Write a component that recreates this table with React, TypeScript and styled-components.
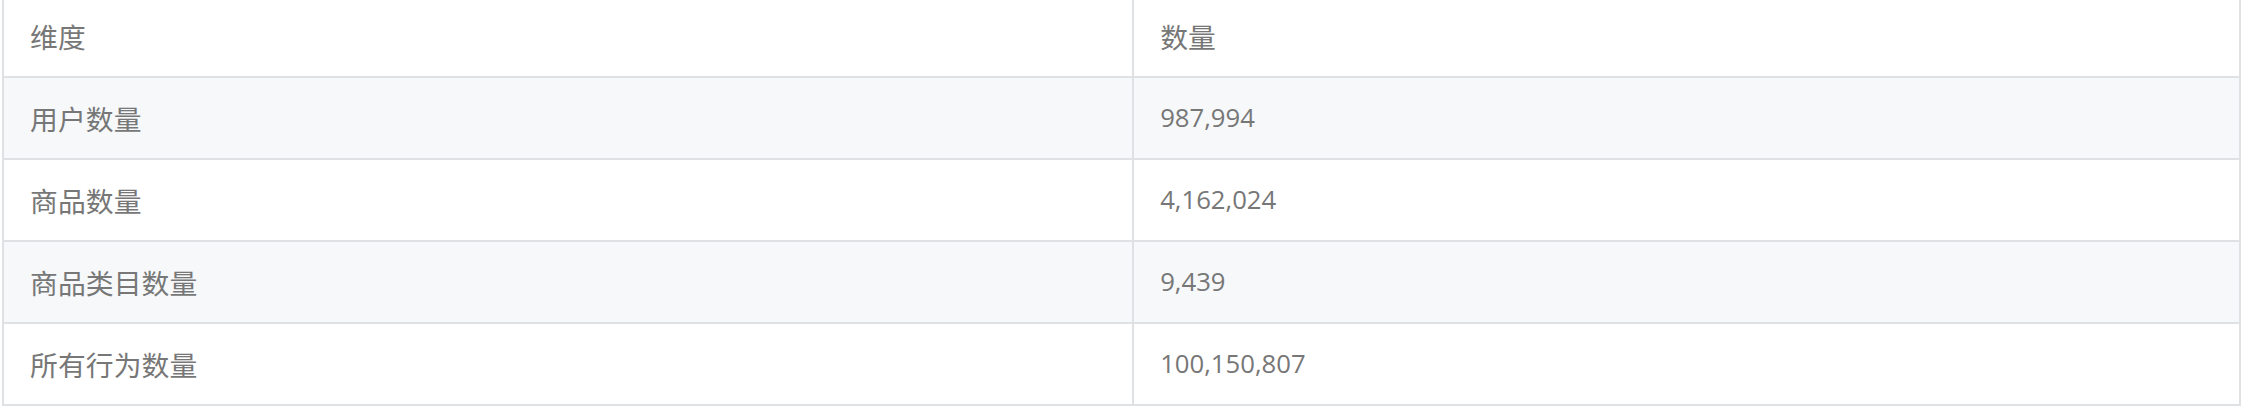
import React from "react";
import styled, { createGlobalStyle } from "styled-components";

const GlobalStyle = createGlobalStyle`
  html, body {
    margin: 0;
    padding: 0;
    background: #ffffff;
    overflow: hidden;
  }
`;

const Page = styled.div`
  padding: 0 2px;
  margin-top: -6px;
`;

const Table = styled.table`
  width: 100%;
  border-collapse: collapse;
  font-family: "Open Sans", "Noto Sans CJK SC", sans-serif;
  font-size: 25.7px;
  color: #777777;
`;

const Row = styled.tr<{ $striped?: boolean }>`
  background: ${(p) => (p.$striped ? "#f6f8fa" : "#ffffff")};
`;

const HeadCell = styled.th`
  border: 2px solid #dfe2e5;
  padding: 20px 26px;
  height: 40px;
  line-height: 40px;
  text-align: left;
  font-weight: 400;
  width: 50.52%;
`;

const Cell = styled.td`
  border: 2px solid #dfe2e5;
  padding: 20px 26px;
  height: 40px;
  line-height: 40px;
  text-align: left;
`;

const Label = styled.span`
  display: inline-block;
  vertical-align: top;
  height: 40px;
  line-height: 40px;
  font-family: "Noto Sans CJK SC", sans-serif;
  font-size: 27.8px;
  letter-spacing: 0.1px;
`;

const rows: [string, string][] = [
  ["用户数量", "987,994"],
  ["商品数量", "4,162,024"],
  ["商品类目数量", "9,439"],
  ["所有行为数量", "100,150,807"],
];

export default function App() {
  return (
    <>
      <GlobalStyle />
      <Page>
        <Table>
          <thead>
            <Row>
              <HeadCell>
                <Label>维度</Label>
              </HeadCell>
              <HeadCell>
                <Label>数量</Label>
              </HeadCell>
            </Row>
          </thead>
          <tbody>
            {rows.map(([k, v], i) => (
              <Row key={k} $striped={i % 2 === 0}>
                <Cell>
                  <Label>{k}</Label>
                </Cell>
                <Cell>{v}</Cell>
              </Row>
            ))}
          </tbody>
        </Table>
      </Page>
    </>
  );
}
